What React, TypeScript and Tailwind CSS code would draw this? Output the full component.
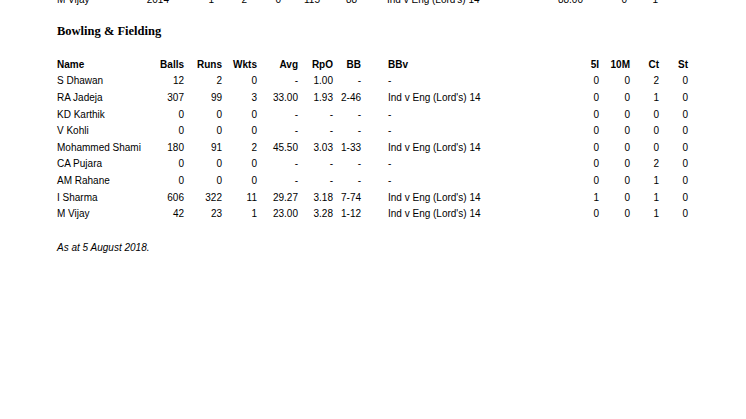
import React from 'react';

// Bowling & fielding summary, one player per row
type Row = {
  name: string;
  balls: string;
  runs: string;
  wkts: string;
  avg: string;
  rpo: string;
  bb: string;
  bbv: string;
  five: string;
  ten: string;
  ct: string;
  st: string;
};

const ROWS: Row[] = [
  { name: 'S Dhawan', balls: '12', runs: '2', wkts: '0', avg: '-', rpo: '1.00', bb: '-', bbv: '-', five: '0', ten: '0', ct: '2', st: '0' },
  { name: 'RA Jadeja', balls: '307', runs: '99', wkts: '3', avg: '33.00', rpo: '1.93', bb: '2-46', bbv: "Ind v Eng (Lord's) 14", five: '0', ten: '0', ct: '1', st: '0' },
  { name: 'KD Karthik', balls: '0', runs: '0', wkts: '0', avg: '-', rpo: '-', bb: '-', bbv: '-', five: '0', ten: '0', ct: '0', st: '0' },
  { name: 'V Kohli', balls: '0', runs: '0', wkts: '0', avg: '-', rpo: '-', bb: '-', bbv: '-', five: '0', ten: '0', ct: '0', st: '0' },
  { name: 'Mohammed Shami', balls: '180', runs: '91', wkts: '2', avg: '45.50', rpo: '3.03', bb: '1-33', bbv: "Ind v Eng (Lord's) 14", five: '0', ten: '0', ct: '0', st: '0' },
  { name: 'CA Pujara', balls: '0', runs: '0', wkts: '0', avg: '-', rpo: '-', bb: '-', bbv: '-', five: '0', ten: '0', ct: '2', st: '0' },
  { name: 'AM Rahane', balls: '0', runs: '0', wkts: '0', avg: '-', rpo: '-', bb: '-', bbv: '-', five: '0', ten: '0', ct: '1', st: '0' },
  { name: 'I Sharma', balls: '606', runs: '322', wkts: '11', avg: '29.27', rpo: '3.18', bb: '7-74', bbv: "Ind v Eng (Lord's) 14", five: '1', ten: '0', ct: '1', st: '0' },
  { name: 'M Vijay', balls: '42', runs: '23', wkts: '1', avg: '23.00', rpo: '3.28', bb: '1-12', bbv: "Ind v Eng (Lord's) 14", five: '0', ten: '0', ct: '1', st: '0' },
];

const GRID =
  'grid grid-cols-[93px_34px_38px_35px_41px_35px_28px_210px_28px_31px_29px_29px] h-[16.6px] leading-[16.6px] items-center whitespace-nowrap';

function TableRow({ row, bold }: { row: Row; bold?: boolean }) {
  return (
    <div className={`${GRID} ${bold ? 'font-bold' : ''}`}>
      <span>{row.name}</span>
      <span className="text-right">{row.balls}</span>
      <span className="text-right">{row.runs}</span>
      <span className="text-right">{row.wkts}</span>
      <span className="text-right">{row.avg}</span>
      <span className="text-right">{row.rpo}</span>
      <span className="text-right">{row.bb}</span>
      <span className="pl-[27px]">{row.bbv}</span>
      <span className="text-right">{row.five}</span>
      <span className="text-right">{row.ten}</span>
      <span className="text-right">{row.ct}</span>
      <span className="text-right">{row.st}</span>
    </div>
  );
}

export default function App() {
  const header: Row = {
    name: 'Name',
    balls: 'Balls',
    runs: 'Runs',
    wkts: 'Wkts',
    avg: 'Avg',
    rpo: 'RpO',
    bb: 'BB',
    bbv: 'BBv',
    five: '5I',
    ten: '10M',
    ct: 'Ct',
    st: 'St',
  };

  return (
    <div className="h-[419px] w-[746px] overflow-hidden bg-white text-black font-['Liberation_Sans',Arial,sans-serif] text-[10px]">
      <div className="pl-[57px]">
        {/* tail of the batting table above, cut off by the page edge */}
        <div className="-mt-[8.4px] grid grid-cols-[73px_39px_45px_33px_34px_39px_37px_193px_33px_44px_31px] h-[16.6px] leading-[16.6px] whitespace-nowrap">
          <span>M Vijay</span>
          <span className="text-right">2014</span>
          <span className="text-right">1</span>
          <span className="text-right">2</span>
          <span className="text-right">0</span>
          <span className="text-right">115</span>
          <span className="text-right">88</span>
          <span className="pl-[30px]">Ind v Eng (Lord's) 14</span>
          <span className="text-right">88.00</span>
          <span className="text-right">0</span>
          <span className="text-right">1</span>
        </div>

        <h2 className="mt-[14.4px] h-[16px] leading-[16px] font-['Liberation_Serif','Times_New_Roman',serif] text-[12.5px] font-bold">
          Bowling &amp; Fielding
        </h2>

        <div className="mt-[18.3px]">
          <TableRow row={header} bold />
          {ROWS.map((r) => (
            <TableRow key={r.name} row={r} />
          ))}
        </div>

        <p className="mt-[17.4px] h-[16.6px] leading-[16.6px] italic">As at 5 August 2018.</p>
      </div>
    </div>
  );
}
